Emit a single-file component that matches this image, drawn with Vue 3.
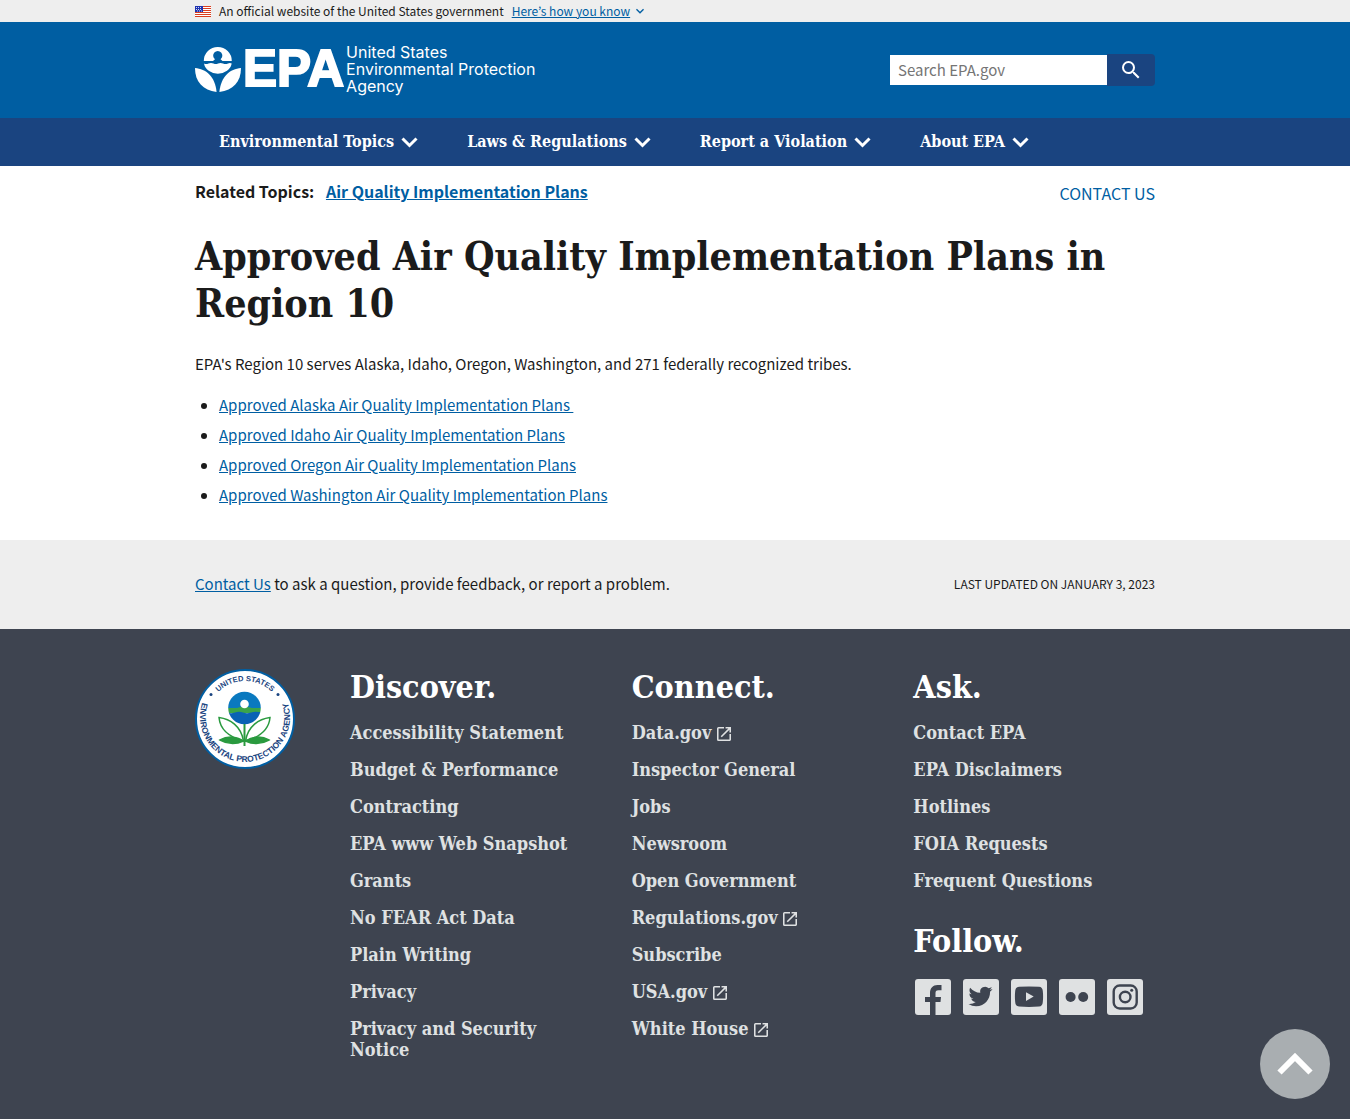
<script setup>
import { ref } from 'vue'

const query = ref('')

const navItems = ['Environmental Topics', 'Laws & Regulations', 'Report a Violation', 'About EPA']

const plans = [
  'Approved Alaska Air Quality Implementation Plans\u00a0',
  'Approved Idaho Air Quality Implementation Plans',
  'Approved Oregon Air Quality Implementation Plans',
  'Approved Washington Air Quality Implementation Plans',
]

const discover = [
  'Accessibility Statement',
  'Budget & Performance',
  'Contracting',
  'EPA www Web Snapshot',
  'Grants',
  'No FEAR Act Data',
  'Plain Writing',
  'Privacy',
  'Privacy and Security Notice',
]

const connect = [
  { label: 'Data.gov', external: true },
  { label: 'Inspector General' },
  { label: 'Jobs' },
  { label: 'Newsroom' },
  { label: 'Open Government' },
  { label: 'Regulations.gov', external: true },
  { label: 'Subscribe' },
  { label: 'USA.gov', external: true },
  { label: 'White House', external: true },
]

const ask = ['Contact EPA', 'EPA Disclaimers', 'Hotlines', 'FOIA Requests', 'Frequent Questions']
</script>

<template>
  <div class="page">
    <section class="banner" aria-label="Official government website">
      <div class="container banner-row">
        <svg class="flag" viewBox="0 0 16 11" aria-hidden="true">
          <rect width="16" height="11" fill="#fff" />
          <path d="M0 .5h16M0 2.5h16M0 4.5h16M0 6.5h16M0 8.5h16M0 10.5h16" stroke="#db3e1f" />
          <rect width="8" height="6" fill="#1e33b1" />
          <path d="M1 1.5h6M1 3.5h6M2 5h5" stroke="#fff" stroke-width=".8" stroke-dasharray="1 1" />
        </svg>
        <span>An official website of the United States government</span>
        <button type="button" class="banner-toggle">
          <span class="underlined">Here’s how you know</span>
          <svg viewBox="0 0 24 24" aria-hidden="true">
            <path d="M16.59 8.59 12 13.17 7.41 8.59 6 10l6 6 6-6z" fill="currentColor" />
          </svg>
        </button>
      </div>
    </section>

    <header class="header">
      <div class="container header-row">
        <a href="#" class="logo">
          <svg class="logo-flower" viewBox="0 0 46 46" aria-hidden="true">
            <g fill="#fff">
              <path d="M8.8 15A14 14 0 1 1 36.800 15H27.500L25.500 13.200A4.600 4.600 0 1 0 20 13.200L18 15Z" />
              <path d="M9 17.500Q11 18.700 13.500 17.500Q16 16.400 18.500 17.500Q21 18.700 23 17.500Q25.500 16.400 28 17.500Q30.500 18.700 33 17.500Q35 16.600 36.700 17.500A14 12 0 0 1 9 17.500Z" />
              <path d="M0 22C11 23 20 30 21.600 46C8 44 0 36 0 22Z" />
              <path d="M46 22C35 23 26 30 24.400 46C38 44 46 36 46 22Z" />
            </g>
          </svg>
          <span class="logo-name">EPA</span>
          <span class="logo-tagline">United States<br />Environmental Protection<br />Agency</span>
        </a>
        <form class="search" role="search" @submit.prevent>
          <input v-model="query" type="search" aria-label="Search EPA.gov" placeholder="Search EPA.gov" />
          <button type="submit" aria-label="Search">
            <svg viewBox="0 0 24 24" aria-hidden="true">
              <path
                fill="#fff"
                d="M15.500 14h-.79l-.28-.27A6.471 6.471 0 0 0 16 9.500 6.500 6.500 0 1 0 9.500 16c1.610 0 3.090-.59 4.230-1.570l.27.28v.79l5 4.990L20.490 19l-4.990-5zm-6 0C7.010 14 5 11.990 5 9.500S7.010 5 9.500 5 14 7.010 14 9.500 11.990 14 9.500 14z"
              />
            </svg>
          </button>
        </form>
      </div>
    </header>

    <nav class="nav" aria-label="Primary">
      <ul class="container nav-list">
        <li v-for="item in navItems" :key="item">
          <button type="button">
            {{ item }}
            <svg viewBox="0 0 17 11" aria-hidden="true">
              <path d="M1.500 1.500 8.500 8.500 15.500 1.500" fill="none" stroke="#fff" stroke-width="3" />
            </svg>
          </button>
        </li>
      </ul>
    </nav>

    <main class="container main">
      <div class="meta">
        <p class="related">Related Topics: <a href="#">Air Quality Implementation Plans</a></p>
        <a href="#" class="contact">CONTACT US</a>
      </div>
      <h1>Approved Air Quality Implementation Plans in Region 10</h1>
      <p class="intro">EPA's Region 10 serves Alaska, Idaho, Oregon, Washington, and 271 federally recognized tribes.</p>
      <ul class="plans">
        <li v-for="plan in plans" :key="plan"><a href="#">{{ plan }}</a></li>
      </ul>
    </main>

    <section class="feedback">
      <div class="container feedback-row">
        <p><a href="#">Contact Us</a> to ask a question, provide feedback, or report a problem.</p>
        <p class="updated">LAST UPDATED ON JANUARY 3, 2023</p>
      </div>
    </section>

    <footer class="footer">
      <div class="container footer-grid">
        <svg class="seal" viewBox="0 0 100 100" role="img" aria-label="EPA seal">
          <defs>
            <path id="seal-top" d="M12 50A38 38 0 0 1 88 50" />
            <path id="seal-bottom" d="M10.700 26A45 45 0 1 0 89.300 26" />
          </defs>
          <circle cx="50" cy="50" r="49" fill="#fff" stroke="#005ea2" stroke-width="2" />
          <g class="seal-text">
            <text font-size="7.600"><textPath href="#seal-top" startOffset="50%">UNITED STATES</textPath></text>
            <text font-size="8.500"><textPath href="#seal-bottom" startOffset="50%">ENVIRONMENTAL PROTECTION AGENCY</textPath></text>
          </g>
          <circle cx="16" cy="25.500" r="1.500" fill="#1a4480" />
          <circle cx="83" cy="25.500" r="1.500" fill="#1a4480" />
          <clipPath id="seal-globe"><circle cx="49.500" cy="39" r="16.300" /></clipPath>
          <g clip-path="url(#seal-globe)">
            <path d="M32 22h35v17H32z" fill="#0a79bf" />
            <path d="M32 39h10l7-2 8 2h10v5H32z" fill="#3ba449" />
            <path d="M32 43.500q4 1.500 8 0t8 0 8 0 11 0v13H32z" fill="#0a62b4" />
          </g>
          <circle cx="49.500" cy="35" r="4.300" fill="#fff" />
          <g stroke="#2a9a3f" stroke-width="1.500">
            <path d="M24 48.500C35 50 46 57 48.500 72C34 68 25 60 24 48.500Z" fill="#fff" />
            <path d="M75 48.500C64 50 53 57 50.500 72C65 68 74 60 75 48.500Z" fill="#fff" />
            <path d="M48.500 72C41 67 32 67 25 71C33 75.500 42 75 48.500 72Z" fill="#2a9a3f" />
            <path d="M50.500 72C58 67 67 67 74 71C66 75.500 57 75 50.500 72Z" fill="#2a9a3f" />
            <path d="M49.500 55V77" fill="none" stroke-width="2" />
          </g>
        </svg>

        <section>
          <h2>Discover.</h2>
          <ul class="links">
            <li v-for="label in discover" :key="label"><a href="#">{{ label }}</a></li>
          </ul>
        </section>

        <section>
          <h2>Connect.</h2>
          <ul class="links">
            <li v-for="link in connect" :key="link.label">
              <a href="#">
                {{ link.label }}
                <svg v-if="link.external" viewBox="3 3 18 18" aria-label="external link">
                  <path
                    fill="currentColor"
                    d="M19 19H5V5h7V3H5a2 2 0 0 0-2 2v14a2 2 0 0 0 2 2h14c1.100 0 2-.9 2-2v-7h-2v7zM14 3v2h3.590l-9.830 9.830 1.410 1.410L19 6.410V10h2V3h-7z"
                  />
                </svg>
              </a>
            </li>
          </ul>
        </section>

        <section>
          <h2>Ask.</h2>
          <ul class="links">
            <li v-for="label in ask" :key="label"><a href="#">{{ label }}</a></li>
          </ul>
          <h2 class="follow">Follow.</h2>
          <div class="social">
            <a href="#" aria-label="Facebook">
              <svg viewBox="0 0 36 36">
                <rect width="36" height="36" rx="3" />
                <path class="ink" d="M15 36V23H10V18H15V14C15 9 18 6 22.500 6H26.500V11.300H23.500C21 11.300 20.500 12.500 20.500 14.300V18H26L25.500 23H20.500V36Z" />
              </svg>
            </a>
            <a href="#" aria-label="Twitter">
              <svg viewBox="0 0 36 36">
                <rect width="36" height="36" rx="3" />
                <path
                  class="ink"
                  transform="translate(5.500 5.500)"
                  d="M23.953 4.570a10 10 0 0 1-2.825.775 4.958 4.958 0 0 0 2.163-2.723c-.951.555-2.005.959-3.127 1.184a4.920 4.920 0 0 0-8.384 4.482C7.690 8.095 4.067 6.130 1.640 3.162a4.822 4.822 0 0 0-.666 2.475c0 1.710.87 3.213 2.188 4.096a4.904 4.904 0 0 1-2.228-.616v.06a4.923 4.923 0 0 0 3.946 4.827 4.996 4.996 0 0 1-2.212.085 4.936 4.936 0 0 0 4.604 3.417 9.867 9.867 0 0 1-6.102 2.105c-.39 0-.779-.023-1.170-.067a13.995 13.995 0 0 0 7.557 2.209c9.053 0 13.998-7.496 13.998-13.985 0-.21 0-.42-.015-.63A9.935 9.935 0 0 0 24 4.590z"
                />
              </svg>
            </a>
            <a href="#" aria-label="YouTube">
              <svg viewBox="0 0 36 36">
                <rect width="36" height="36" rx="3" />
                <path class="ink" d="M8 7.800Q18 7 28 7.800Q31.500 8 31.800 12Q32.400 17.500 31.800 23Q31.500 27.300 28 27.500Q18 28.400 8 27.500Q4.500 27.300 4.200 23Q3.600 17.500 4.200 12Q4.500 8 8 7.800Z" />
                <path d="M15 13.300 22.700 17.600 15 21.900Z" />
              </svg>
            </a>
            <a href="#" aria-label="Flickr">
              <svg viewBox="0 0 36 36">
                <rect width="36" height="36" rx="3" />
                <circle class="ink" cx="11.600" cy="18" r="5" />
                <circle class="ink" cx="24.200" cy="18" r="5" />
              </svg>
            </a>
            <a href="#" aria-label="Instagram">
              <svg viewBox="0 0 36 36">
                <rect width="36" height="36" rx="3" />
                <rect class="line" x="6.700" y="6.500" width="23" height="23" rx="6" />
                <circle class="line" cx="18.200" cy="18" r="5.300" />
                <circle class="ink" cx="24.700" cy="11.300" r="1.500" />
              </svg>
            </a>
          </div>
        </section>
      </div>
    </footer>

    <a href="#" class="to-top" aria-label="Back to top">
      <svg viewBox="0 0 36 24" aria-hidden="true">
        <path d="M2.500 20.500 18 5 33.500 20.500" fill="none" stroke="#fff" stroke-width="6" />
      </svg>
    </a>
  </div>
</template>

<style>
body {
  margin: 0;
}
</style>

<style scoped>
.page {
  --sans: 'Noto Sans CJK JP', 'Noto Sans', sans-serif;
  --serif: 'DejaVu Serif Condensed', 'DejaVu Serif', serif;
  display: flex;
  flex-direction: column;
  min-height: 100vh;
  background: #fff;
  color: #1b1b1b;
  font-family: var(--sans);
  font-size: 15px;
  line-height: 24px;
}

.container {
  box-sizing: border-box;
  width: 100%;
  max-width: 960px;
  margin: 0 auto;
}

h1,
h2,
p,
ul {
  margin: 0;
  padding: 0;
}

a {
  color: #005ea2;
}

button {
  margin: 0;
  padding: 0;
  border: 0;
  background: none;
  color: inherit;
  font: inherit;
  cursor: pointer;
}

.banner {
  background: #eee;
}

.banner-row {
  display: flex;
  align-items: center;
  gap: 8px;
  font-size: 12px;
  line-height: 22px;
}

.flag {
  width: 16px;
  height: 11px;
}

.banner-toggle {
  display: flex;
  align-items: center;
  gap: 2px;
  color: #005ea2;
}

.banner-toggle svg {
  width: 16px;
  height: 16px;
}

.underlined {
  text-decoration: underline;
}

.header {
  background: #005ea2;
}

.header-row {
  display: flex;
  justify-content: space-between;
  align-items: center;
  height: 96px;
}

.logo {
  display: flex;
  align-items: center;
  gap: 2px;
  padding-bottom: 2px;
  color: #fff;
  text-decoration: none;
}

.logo-flower {
  width: 46px;
  height: 46px;
}

.logo-name {
  font: bold 51px/48px 'Liberation Sans', sans-serif;
  -webkit-text-stroke: 2px #fff;
}

.logo-tagline {
  font: 16px/17px Inter, 'Liberation Sans', sans-serif;
}

.search {
  display: flex;
  height: 32px;
}

.search input {
  box-sizing: border-box;
  width: 218px;
  padding: 0 8px;
  border: 1px solid #005ea2;
  border-right: 0;
  border-radius: 0;
  background: #fff;
  color: #1b1b1b;
  font: 15px/30px var(--sans);
  appearance: none;
}

.search input::placeholder {
  color: #757575;
}

.search button {
  display: flex;
  align-items: center;
  justify-content: center;
  width: 48px;
  border-radius: 0 4px 4px 0;
  background: #1a4480;
}

.search svg {
  width: 24px;
  height: 24px;
}

.nav {
  background: #1a4480;
}

.nav-list {
  display: flex;
  gap: 1px;
  list-style: none;
}

.nav-list button {
  display: flex;
  align-items: center;
  gap: 7px;
  padding: 0 24px;
  color: #fff;
  font: bold 16px/48px var(--serif);
}

.nav-list svg {
  width: 17px;
  height: 11px;
}

.main {
  padding: 13px 0 33px;
}

.meta {
  display: flex;
  justify-content: space-between;
  align-items: flex-start;
  font-size: 16px;
}

.related {
  font-weight: bold;
}

.related a {
  margin-left: 8px;
}

.contact {
  margin-top: 2px;
  text-decoration: none;
}

h1 {
  margin-top: 28px;
  font: bold 39px/47px var(--serif);
}

.intro {
  margin-top: 25px;
}

.plans {
  display: flex;
  flex-direction: column;
  gap: 6px;
  margin-top: 17px;
  padding-left: 24px;
}

.feedback {
  background: #eee;
}

.feedback-row {
  display: flex;
  justify-content: space-between;
  align-items: center;
  padding: 32px 0 33px;
}

.updated {
  font-size: 12px;
}

.footer {
  flex: 1;
  padding: 40px 0 32px;
  background: #3e4450;
}

.footer-grid {
  display: grid;
  grid-template-columns: 115px repeat(3, 1fr);
  column-gap: 40px;
}

.seal {
  width: 100px;
  height: 100px;
}

.seal-text {
  fill: #1a4480;
  font-family: 'Liberation Sans', sans-serif;
  font-weight: bold;
  text-anchor: middle;
}

h2 {
  color: #fff;
  font: bold 32px/36px var(--serif);
}

.links {
  display: flex;
  flex-direction: column;
  gap: 16px;
  margin-top: 17px;
  list-style: none;
  font: bold 18px/21px var(--serif);
}

.links a {
  color: #dfe1e2;
  text-decoration: none;
}

.links svg {
  width: 14px;
  height: 14px;
  vertical-align: -2px;
}

.follow {
  margin-top: 32px;
}

.social {
  display: flex;
  gap: 8px;
  margin-top: 18px;
}

.social a {
  display: flex;
  justify-content: center;
  align-items: center;
  width: 40px;
  height: 40px;
}

.social svg {
  width: 36px;
  height: 36px;
  fill: #dfe1e2;
}

.social .ink {
  fill: #3e4450;
}

.social .line {
  fill: none;
  stroke: #3e4450;
  stroke-width: 2.400;
}

.to-top {
  position: fixed;
  right: 20px;
  bottom: 20px;
  display: flex;
  align-items: center;
  justify-content: center;
  width: 70px;
  height: 70px;
  border-radius: 50%;
  background: #a9aeb1;
}

.to-top svg {
  width: 36px;
  height: 24px;
}
</style>
